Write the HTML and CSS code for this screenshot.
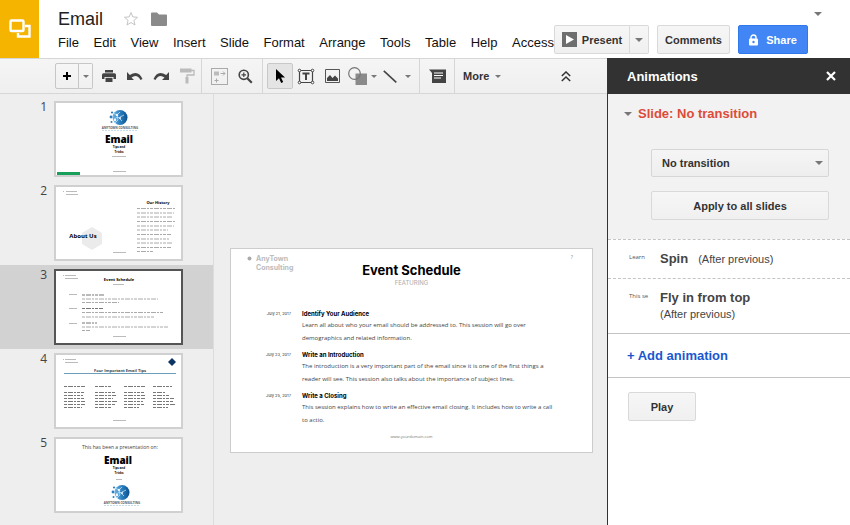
FILE: index.html
```
<!DOCTYPE html>
<html lang="en">
<head>
  <meta charset="UTF-8">
  <meta name="viewport" content="width=device-width, initial-scale=1.0">
  <title>Email - Slides</title>
  <link rel="stylesheet" href="styles.css">
</head>
<body>
  <svg class="defs" aria-hidden="true">
    <defs>
      <linearGradient id="globe" x1="0" x2="1">
        <stop offset="0" stop-color="#6fb4e2"/>
        <stop offset="0.5" stop-color="#2b7fc0"/>
        <stop offset="1" stop-color="#0b4f8c"/>
      </linearGradient>
      <symbol id="company" viewBox="0 0 42 22">
        <circle cx="21" cy="7.500" r="7.500" fill="url(#globe)"/>
        <path d="M14 3l4 2 3-3M15 9l4-2 4 4M18 5l1 5-3 3M21 7l4-2" stroke="#bfe0f5" stroke-width="0.8" fill="none"/>
        <g fill="#eaf6ff"><circle cx="18" cy="5" r="1.200"/><circle cx="16" cy="10" r="1.300"/><circle cx="21" cy="8" r="1"/></g>
        <g fill="#2b7fc0"><circle cx="12" cy="7" r="1.400"/><circle cx="13" cy="2.500" r="1.100"/><circle cx="12.500" cy="12" r="1"/></g>
        <text x="21" y="19" text-anchor="middle" font-size="3" font-weight="bold" fill="#4c5866">ANYTOWN CONSULTING</text>
        <path d="M3 20.500h36" stroke="#9cc6e0" stroke-width="0.6" stroke-dasharray="2 1"/>
      </symbol>
    </defs>
  </svg>

  <header class="header">
    <a class="logo" href="#" aria-label="Slides home">
      <svg width="22" height="20" viewBox="0 0 22 20" fill="none" stroke="#fff" stroke-width="2.400">
        <path d="M16 7h4.500v10.500H9V14"/>
        <rect x="1.500" y="1.500" width="13" height="10.500" rx="1"/>
      </svg>
    </a>
    <div class="doc">
      <div class="doc-title">
        <h1>Email</h1>
        <button class="icon-btn" aria-label="Star">
          <svg width="16" height="16" viewBox="0 0 16 16"><path d="M8 1.500l1.800 4.400 4.700.4-3.600 3.100 1.100 4.600L8 11.500 4 14l1.100-4.600L1.500 6.300l4.700-.4z" fill="none" stroke="#c4c4c4"/></svg>
        </button>
        <button class="icon-btn" aria-label="Move to folder">
          <svg width="16" height="14" viewBox="0 0 16 14"><path d="M0 1.500Q0 .5 1 .5h5l2 2h7q1 0 1 1V13q0 1-1 1H1q-1 0-1-1z" fill="#8a8a8a"/></svg>
        </button>
      </div>
      <nav class="menu">
        <a href="#">File</a>
        <a href="#">Edit</a>
        <a href="#">View</a>
        <a href="#">Insert</a>
        <a href="#">Slide</a>
        <a href="#">Format</a>
        <a href="#">Arrange</a>
        <a href="#">Tools</a>
        <a href="#">Table</a>
        <a href="#">Help</a>
        <a href="#">Access</a>
      </nav>
    </div>
    <div class="actions">
      <div class="split">
        <button class="btn present">
          <svg width="15" height="15" viewBox="0 0 15 15"><rect width="15" height="15" fill="#6e6e6e"/><path d="M4 3l8 4.500L4 12z" fill="#fff"/></svg>
          Present
        </button>
        <button class="btn present-more" aria-label="Present options"><span class="caret"></span></button>
      </div>
      <button class="btn comments">Comments</button>
      <button class="btn share">
        <svg width="9" height="12" viewBox="0 0 9 12"><path d="M2 5V3.500a2.500 2.500 0 0 1 5 0V5" fill="none" stroke="#fff" stroke-width="1.400"/><rect y="4.500" width="9" height="7" rx="1" fill="#fff"/><circle cx="4.500" cy="8" r="1.200" fill="#4285f4"/></svg>
        Share
      </button>
      <button class="icon-btn account" aria-label="Account"><span class="caret"></span></button>
    </div>
  </header>

  <div class="main">
    <div class="workspace">
      <div class="toolbar">
        <div class="tools first">
          <div class="split add">
            <button class="btn" aria-label="New slide"><svg width="8" height="8" viewBox="0 0 8 8"><path d="M4 0v8M0 4h8" stroke="#000" stroke-width="2"/></svg></button>
            <button class="btn add-more" aria-label="New slide with layout"><span class="caret small"></span></button>
          </div>
          <button class="tool" aria-label="Print">
            <svg width="14" height="12" viewBox="0 0 14 12" fill="#444"><path d="M3 0h8v2.500H3zM1.500 3.200h11Q14 3.200 14 4.700V9h-2.500V7h-9v2H0V4.700q0-1.500 1.500-1.500z"/><path d="M3.500 7.800h7V12h-7z"/></svg>
          </button>
          <button class="tool" aria-label="Undo">
            <svg width="16" height="10" viewBox="0 0 16 10"><path d="M0 1v8h7L4.500 6.500Q10 2.500 13.500 9l2-1Q11.500-1.500 2.800 4z" fill="#444"/></svg>
          </button>
          <button class="tool" aria-label="Redo">
            <svg width="16" height="10" viewBox="0 0 16 10"><path d="M16 1v8H9l2.500-2.500Q6 2.500 2.500 9l-2-1Q4.500-1.500 13.200 4z" fill="#444"/></svg>
          </button>
          <button class="tool" aria-label="Paint format">
            <svg width="15" height="16" viewBox="0 0 15 16"><path d="M0 .5h11.500v4H0z" fill="#bbb"/><path d="M11 2.500h3v4.500H7v3" fill="none" stroke="#bbb" stroke-width="1.300"/><path d="M5.500 9h3v6.500h-3z" fill="#bbb"/></svg>
          </button>
        </div>
        <div class="tools">
          <button class="tool" aria-label="Fit">
            <svg width="17" height="17" viewBox="0 0 17 17" fill="none" stroke="#aaa"><rect x=".5" y=".5" width="16" height="16"/><path d="M3 3.500h5v4H3z" fill="#bbb" stroke="none"/><path d="M9.500 5.500H14M12 3.500l2 2-2 2M5.500 14.500v-4M3.500 12.500h4"/></svg>
          </button>
          <button class="tool" aria-label="Zoom">
            <svg width="15" height="15" viewBox="0 0 15 15" fill="none" stroke="#444"><circle cx="5.800" cy="5.800" r="4.600" stroke-width="1.600"/><path d="M9.300 9.300l4.500 4.500" stroke-width="2.200"/><path d="M3.500 5.800h4.600M5.800 3.500v4.600" stroke-width="1.200"/></svg>
          </button>
        </div>
        <div class="tools">
          <button class="tool active" aria-label="Select">
            <svg width="10" height="15" viewBox="0 0 10 15"><path d="M1 0v12l3-2.800L6.200 14l2-1L6 8.500h4z" fill="#000"/></svg>
          </button>
          <button class="tool" aria-label="Text box">
            <svg width="18" height="17" viewBox="0 0 18 17" fill="none" stroke="#444"><path d="M2.500 2.500h13v12h-13z" stroke-width="1.200"/><path d="M5.500 5.500h7M9 5.500V12" stroke-width="2"/><g fill="#fff"><circle cx="2.500" cy="2.500" r="1.300"/><circle cx="15.500" cy="2.500" r="1.300"/><circle cx="2.500" cy="14.500" r="1.300"/><circle cx="15.500" cy="14.500" r="1.300"/></g></svg>
          </button>
          <button class="tool" aria-label="Image">
            <svg width="15" height="14" viewBox="0 0 15 14"><path d="M.5.5h14v13H.5z" fill="none" stroke="#555"/><path d="M2 12V9l3-3 2.500 3L10 6.500l3 3V12z" fill="#444"/></svg>
          </button>
          <button class="tool with-caret" aria-label="Shape">
            <svg width="19" height="18" viewBox="0 0 19 18"><path d="M7.500 6.500H19V18H7.500z" fill="#8a8a8a"/><circle cx="6.500" cy="6.500" r="5.800" fill="none" stroke="#777" stroke-width="1.200"/></svg>
            <span class="caret small"></span>
          </button>
          <button class="tool with-caret line" aria-label="Line">
            <svg width="14" height="13" viewBox="0 0 14 13"><path d="M.8.8l12.500 11.500" stroke="#444" stroke-width="1.600"/></svg>
            <span class="caret small"></span>
          </button>
        </div>
        <div class="tools">
          <button class="tool" aria-label="Insert comment">
            <svg width="17" height="15" viewBox="0 0 17 15"><path d="M0 .5h17v13.500H3V4z" fill="#444"/><path d="M5 4h9M5 6.500h9M5 9h7" stroke="#fff"/></svg>
          </button>
        </div>
        <div class="tools last">
          <button class="tool more">More <span class="caret small"></span></button>
        </div>
        <button class="tool collapse" aria-label="Hide menus">
          <svg width="10" height="11" viewBox="0 0 10 11" fill="none" stroke="#333" stroke-width="1.500"><path d="M.8 5L5 1l4.200 4M.8 10L5 6l4.200 4"/></svg>
        </button>
      </div>

      <div class="editor">
        <ol class="filmstrip">
          <li>
            <span>1</span>
            <svg class="thumb" viewBox="0 0 125 72">
              <use href="#company" x="43" y="7" width="42" height="22"/>
              <text class="t-title" x="63" y="40">Email</text>
              <text class="t-sub" x="63" y="45">Tips and</text>
              <text class="t-sub" x="63" y="50">Tricks</text>
              <path class="rule" d="M56 53.500h14M57 68.500h13"/>
              <path d="M1 70.500h23" stroke="#18a05a" stroke-width="3"/>
            </svg>
          </li>
          <li>
            <span>2</span>
            <svg class="thumb" viewBox="0 0 125 72">
              <path class="rule" d="M7 4.500h1M10 4.500h11M10 7.500h12M57 65.500h13"/>
              <path d="M36 40l10 6v11l-10 6-10-6V46z" fill="#ebebeb"/>
              <text class="t-head" x="27" y="51">About Us</text>
              <text class="t-small" x="102" y="17">Our History</text>
              <path class="copy" d="M81 21.500h39M81 26h37M81 30h36M81 34.500h38M81 39h37M81 43h31M81 47.500h34M81 52h32M81 56h36M81 60.500h34M81 64.500h16"/>
            </svg>
          </li>
          <li class="current">
            <span>3</span>
            <svg class="thumb" viewBox="0 0 125 72">
              <path class="rule" d="M7 4.500h1M9 4.500h11M9 7.500h13M57 13.500h11M57 65.500h13M13 23.500h8M13 37.500h8M13 52.500h8"/>
              <text class="t-small" x="63" y="10">Event Schedule</text>
              <path class="copy dark" d="M26 24h22M26 37.500h21M26 52h15"/>
              <path class="copy" d="M26 28h76M26 31.500h37M26 41.500h82M26 46h72M26 56h86M26 59.500h8"/>
            </svg>
          </li>
          <li>
            <span>4</span>
            <svg class="thumb" viewBox="0 0 125 72">
              <path class="rule" d="M7 4.500h1M9 4.500h11M9 7.500h13M57 65.500h13"/>
              <path d="M116 3l4 4-4 4-4-4z" fill="#0d3563"/>
              <text class="t-small navy" x="64" y="17">Four Important Email Tips</text>
              <path d="M8 18.500h112" stroke="#6f9fb8"/>
              <path class="copy dark" d="M8 31.500h21M39 31.500h16M68 31.500h21M97 31.500h19"/>
              <path class="copy dark" d="M8 37.500h20M8 40.500h19M8 43.500h20M8 46.500h21M8 49.500h21M8 52.500h18M39 37.500h20M39 40.500h21M39 43.500h18M39 46.500h22M39 49.500h20M39 52.500h17M68 37.500h20M68 40.500h21M68 43.500h21M68 46.500h19M68 49.500h20M68 52.500h15M97 37.500h12M97 40.500h17M97 43.500h21M97 46.500h20M97 49.500h22M97 52.500h15"/>
            </svg>
          </li>
          <li>
            <span>5</span>
            <svg class="thumb" viewBox="0 0 125 72">
              <text class="t-line" x="64" y="10">This has been a presentation on:</text>
              <text class="t-title" x="62" y="25">Email</text>
              <text class="t-sub" x="63" y="30">Tips and</text>
              <text class="t-sub" x="63" y="35">Tricks</text>
              <path class="rule" d="M60 40.500h6"/>
              <use href="#company" x="45" y="46" width="42" height="22"/>
            </svg>
          </li>
        </ol>

        <main class="canvas">
          <article class="slide">
            <div class="brand"><svg width="5" height="5" viewBox="0 0 5 5"><circle cx="2.500" cy="2.500" r="2" fill="#aaa"/></svg><span>AnyTown<br>Consulting</span></div>
            <span class="page-mark">?</span>
            <h2>Event Schedule</h2>
            <p class="featuring">FEATURING</p>
            <dl class="agenda">
              <dt>July 21, 2017</dt>
              <dd>
                <h3>Identify Your Audience</h3>
                <p>Learn all about who your email should be addressed to. This session will go over<br>demographics and related information.</p>
              </dd>
              <dt>July 23, 2017</dt>
              <dd>
                <h3>Write an Introduction</h3>
                <p>The introduction is a very important part of the email since it is one of the first things a<br>reader will see. This session also talks about the importance of subject lines.</p>
              </dd>
              <dt>July 25, 2017</dt>
              <dd>
                <h3>Write a Closing</h3>
                <p>This session explains how to write an effective email closing. It includes how to write a call<br>to actio.</p>
              </dd>
            </dl>
            <footer>www.yourdomain.com</footer>
          </article>
        </main>
      </div>
    </div>

    <aside class="panel">
      <div class="panel-head">
        <h2>Animations</h2>
        <button class="icon-btn" aria-label="Close">
          <svg width="10" height="10" viewBox="0 0 10 10"><path d="M1 1l8 8M9 1L1 9" stroke="#fff" stroke-width="2.200"/></svg>
        </button>
      </div>
      <section class="transition">
        <h3><span class="caret"></span>Slide: No transition</h3>
        <div class="fields">
          <div class="select">
            <select aria-label="Transition">
              <option>No transition</option>
              <option>Dissolve</option>
              <option>Fade</option>
            </select>
            <span class="caret"></span>
          </div>
          <button class="btn">Apply to all slides</button>
        </div>
      </section>
      <ul class="animations">
        <li>
          <span class="object">Learn</span>
          <div class="effect"><strong>Spin</strong> <span class="when">(After previous)</span></div>
        </li>
        <li>
          <span class="object">This se</span>
          <div class="effect stacked"><strong>Fly in from top</strong> <span class="when">(After previous)</span></div>
        </li>
      </ul>
      <div class="add-animation"><a href="#">+ Add animation</a></div>
      <button class="btn play">Play</button>
    </aside>
  </div>
</body>
</html>
```
FILE: styles.css
```
* {
  box-sizing: border-box;
}
body {
  margin: 0;
  min-height: 100vh;
  display: flex;
  flex-direction: column;
  font-family: 'Liberation Sans', Arial, sans-serif;
  font-size: 13px;
  color: #222;
  background: #fff;
}
h1, h2, h3, p, ol, ul, dl, dd {
  margin: 0;
  padding: 0;
}
ol, ul {
  list-style: none;
}
a {
  color: inherit;
  text-decoration: none;
}
svg {
  flex: none;
}
.defs {
  position: absolute;
  width: 0;
  height: 0;
}

/* shared controls */
button, select {
  font: bold 11px 'Liberation Sans', Arial, sans-serif;
  color: #333;
  cursor: pointer;
}
.btn {
  display: flex;
  align-items: center;
  justify-content: center;
  height: 29px;
  padding: 0;
  border: 1px solid #d9d9d9;
  border-radius: 2px;
  background: linear-gradient(#f6f6f6, #f0f0f0);
}
.icon-btn, .tool {
  display: flex;
  align-items: center;
  justify-content: center;
  padding: 0;
  border: none;
  background: none;
}
.split {
  display: flex;
}
.split .btn:first-child {
  border-radius: 2px 0 0 2px;
}
.split .btn:last-child {
  border-left: none;
  border-radius: 0 2px 2px 0;
}
.caret {
  border: 4px solid transparent;
  border-top-color: #777;
  border-bottom: none;
}
.caret.small {
  border-width: 3px;
  border-bottom: none;
}

/* header */
.header {
  display: flex;
  height: 58px;
}
.logo {
  display: flex;
  align-items: center;
  justify-content: center;
  width: 39px;
  background: #f4b400;
}
.doc {
  flex: 1;
  min-width: 0;
  padding: 8px 0 0 19px;
}
.doc-title {
  display: flex;
  align-items: center;
  gap: 12px;
  height: 22px;
}
.doc-title h1 {
  margin-right: 8px;
  font-size: 18px;
  font-weight: normal;
}
.menu {
  display: flex;
  justify-content: space-between;
  max-width: 500px;
  margin-top: 5px;
  line-height: 16px;
  color: #111;
}
.actions {
  display: flex;
  align-items: flex-start;
  padding: 25px 22px 0 0;
}
.present {
  gap: 5px;
  width: 76px;
}
.present-more {
  width: 19px;
}
.comments {
  width: 73px;
  margin: 0 8px;
}
.share {
  gap: 8px;
  width: 70px;
  border-color: #3079ed;
  background: #4285f4;
  color: #fff;
}
.account {
  width: 20px;
  height: 16px;
  margin-top: -19px;
}

/* toolbar */
.main {
  flex: 1;
  display: flex;
}
.workspace {
  flex: 1;
  min-width: 0;
  display: flex;
  flex-direction: column;
}
.toolbar {
  display: flex;
  height: 36px;
  border-top: 1px solid #d6d6d6;
  border-bottom: 1px solid #d6d6d6;
  background: linear-gradient(#f5f5f5, #efefef);
}
.tools {
  display: flex;
  align-items: center;
  padding: 0 4px;
  border-right: 1px solid #d6d6d6;
}
.tools.first {
  padding: 0 1px 0 55px;
}
.tools.last {
  padding: 0 8px;
  border-right: none;
}
.tool {
  width: 26px;
  height: 26px;
}
.tool.active {
  border: 1px solid #c8c8c8;
  border-radius: 2px;
  background: #e4e4e4;
}
.tool.with-caret {
  width: 34px;
  gap: 4px;
}
.tool.line {
  width: 36px;
  gap: 8px;
}
.tool.more {
  width: auto;
  gap: 6px;
}
.tool.collapse {
  margin: 4px 28px 0 auto;
}
.add {
  margin-right: 3px;
}
.add .btn {
  width: 24px;
  height: 26px;
  border-color: #c6c6c6;
}
.add .add-more {
  width: 14px;
}

/* slide list */
.editor {
  flex: 1;
  display: flex;
  background: #eee;
}
.filmstrip {
  width: 214px;
  padding-top: 3px;
  border-right: 1px solid #dcdcdc;
}
.filmstrip li {
  display: flex;
  height: 84px;
  padding-top: 4px;
  font: 12px/12px 'Open Sans', sans-serif;
  color: #444;
}
.filmstrip li span {
  width: 54px;
  padding-right: 7px;
  text-align: right;
}
.filmstrip li.current {
  background: #d2d2d2;
}
.thumb {
  width: 129px;
  height: 76px;
  border: 2px solid #d0d0d0;
  background: #fff;
  font-family: 'Open Sans', sans-serif;
}
.current .thumb {
  border-color: #555;
}
.thumb text {
  text-anchor: middle;
}
.t-title {
  font-size: 10px;
  font-weight: 800;
}
.t-head {
  font-size: 6px;
  font-weight: bold;
}
.t-small {
  font-size: 4px;
  font-weight: bold;
}
.t-sub {
  font-size: 3px;
  font-weight: bold;
}
.t-line {
  font-size: 5px;
  fill: #444;
}
.t-small.navy {
  fill: #264a60;
}
.rule {
  stroke: #bbb;
}
.copy {
  stroke: #aaa;
  stroke-dasharray: 3 1 5 1 2 1;
}
.copy.dark {
  stroke: #777;
}

/* open slide */
.canvas {
  flex: 1;
  min-width: 0;
  padding: 154px 14px 0 16px;
}
.slide {
  position: relative;
  height: 205px;
  padding: 15px 0 0;
  border: 1px solid #ccc;
  background: #fff;
  font-family: 'Open Sans', sans-serif;
  text-align: center;
}
.brand {
  position: absolute;
  top: 5px;
  left: 16px;
  display: flex;
  align-items: center;
  gap: 4px;
  font: bold 7px/9px Inter, sans-serif;
  color: #bbb;
  text-align: left;
}
.brand svg {
  align-self: flex-start;
  margin-top: 2px;
}
.page-mark {
  position: absolute;
  top: 5px;
  right: 19px;
  font-size: 5px;
  color: #888;
}
.slide h2 {
  font: bold 13px/13px Inter, sans-serif;
  color: #000;
}
.featuring {
  font: 6px/12px Inter, sans-serif;
  color: #aaa;
}
.agenda {
  display: grid;
  grid-template-columns: 60px 1fr;
  column-gap: 11px;
  row-gap: 4px;
  padding-top: 19px;
  text-align: left;
}
.agenda dt {
  font: 4px/11px Inter, sans-serif;
  text-align: right;
  color: #333;
}
.agenda h3 {
  font: bold 6px/11px Inter, sans-serif;
  color: #000;
}
.agenda p {
  font-size: 6px;
  line-height: 13px;
  color: #444;
  white-space: nowrap;
}
.slide footer {
  padding-top: 7px;
  font-size: 4px;
  color: #777;
}

/* animations panel */
.panel {
  width: 243px;
  border-left: 1px solid #333;
}
.panel-head {
  display: flex;
  align-items: center;
  justify-content: space-between;
  height: 36px;
  padding: 0 14px 0 19px;
  background: #323232;
  color: #fff;
}
.panel-head h2 {
  font-size: 13px;
}
.transition {
  padding: 12px 21px 19px 16px;
  background: #f2f2f2;
}
.transition h3 {
  display: flex;
  align-items: center;
  gap: 6px;
  font-size: 13px;
  line-height: 16px;
  color: #dd4b39;
}
.fields {
  display: flex;
  flex-direction: column;
  gap: 14px;
  padding: 27px 0 0 27px;
}
.select {
  position: relative;
}
.select select {
  display: block;
  width: 100%;
  height: 28px;
  padding: 0 10px;
  appearance: none;
  border: 1px solid #d6d6d6;
  border-radius: 2px;
  background: linear-gradient(#f5f5f5, #eee);
}
.select .caret {
  position: absolute;
  top: 12px;
  right: 6px;
  pointer-events: none;
}
.animations li {
  display: flex;
  gap: 8px;
  padding: 10px 12px 10px 21px;
  border-top: 1px dashed #c4c4c4;
}
.object {
  width: 23px;
  white-space: nowrap;
  font: 6px/14px 'Open Sans', sans-serif;
  color: #555;
}
.effect {
  display: flex;
  align-items: baseline;
  gap: 10px;
  line-height: 17px;
  color: #444;
}
.effect.stacked {
  flex-direction: column;
  gap: 0;
}
.when {
  font-size: 11px;
}
.add-animation {
  padding: 13px 19px;
  border-top: 1px solid #c4c4c4;
  border-bottom: 1px solid #c4c4c4;
  line-height: 17px;
  font-weight: bold;
  color: #1a57cf;
}
.play {
  width: 68px;
  margin: 14px 0 0 20px;
}
```
